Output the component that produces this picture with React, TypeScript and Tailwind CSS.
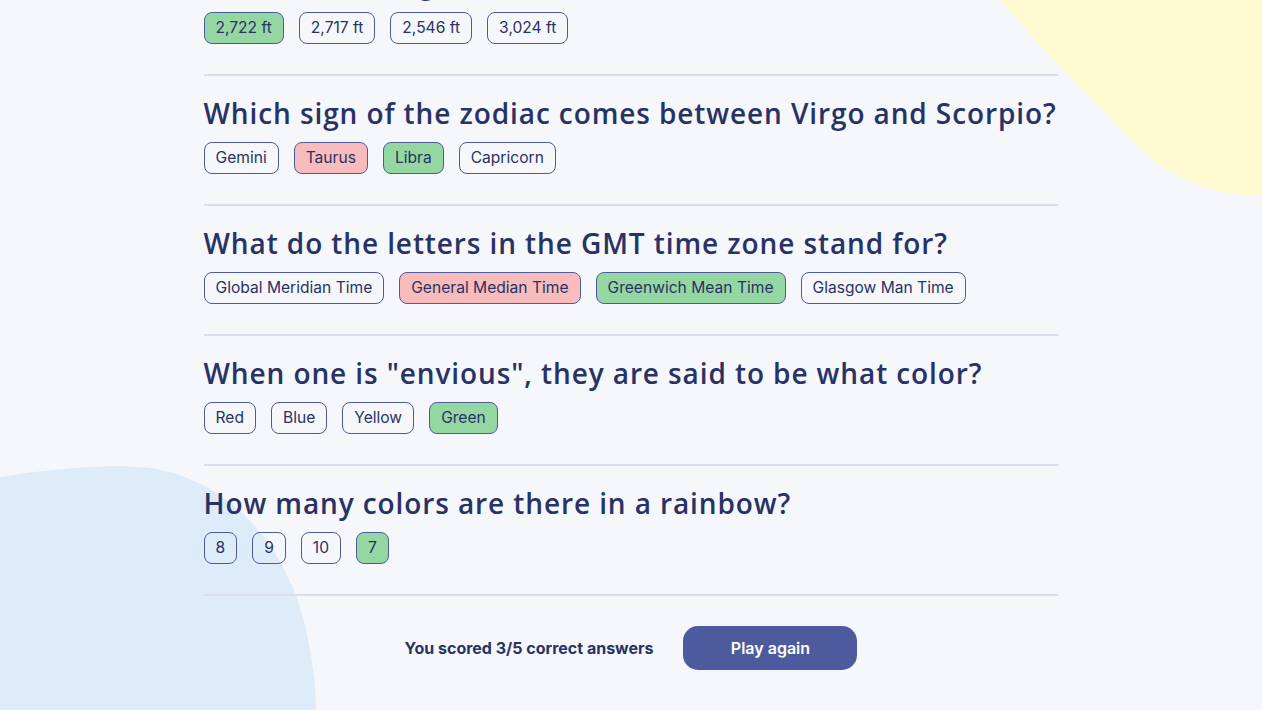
import React from 'react';

type Q = { q: string; answers: string[]; correct: string; picked: string };

const questions: Q[] = [
  { q: 'What is the height of the Hoover Dam in feet?', answers: ['2,722 ft', '2,717 ft', '2,546 ft', '3,024 ft'], correct: '2,722 ft', picked: '2,722 ft' },
  { q: 'Which sign of the zodiac comes between Virgo and Scorpio?', answers: ['Gemini', 'Taurus', 'Libra', 'Capricorn'], correct: 'Libra', picked: 'Taurus' },
  { q: 'What do the letters in the GMT time zone stand for?', answers: ['Global Meridian Time', 'General Median Time', 'Greenwich Mean Time', 'Glasgow Man Time'], correct: 'Greenwich Mean Time', picked: 'General Median Time' },
  { q: 'When one is "envious", they are said to be what color?', answers: ['Red', 'Blue', 'Yellow', 'Green'], correct: 'Green', picked: 'Green' },
  { q: 'How many colors are there in a rainbow?', answers: ['8', '9', '10', '7'], correct: '7', picked: '7' },
];

function Answer({ label, correct, picked }: { label: string; correct: string; picked: string }) {
  let tone = 'bg-transparent';
  if (label === correct) tone = 'bg-[#94D7A2]';
  else if (label === picked) tone = 'bg-[#F8BCBC]';
  return (
    <span className={`h-8 px-[11px] flex items-center rounded-[8px] border border-[#4D5B9E] text-[15.6px] font-normal text-[#293264] ${tone}`}>
      {label}
    </span>
  );
}

export default function App() {
  return (
    <div className="relative w-[1262px] h-[710px] overflow-hidden bg-[#F5F7FB] font-['Inter',sans-serif]">
      {/* blobs */}
      <svg className="absolute top-0 right-0" width="270" height="200" viewBox="0 0 270 200">
        <path d="M8 0 C60 60 110 110 150 150 C185 182 225 196 270 196 L270 0 Z" fill="#FFFAD1" />
      </svg>
      <svg className="absolute left-0 bottom-0" width="320" height="245" viewBox="0 0 320 245">
        <path d="M0 12 C50 4 110 -2 150 3 C230 15 285 80 305 160 C313 195 316 225 316 245 L0 245 Z" fill="#DEEBF8" />
      </svg>

      <div className="relative w-[855px] mx-auto -mt-[54px]">
        {questions.map((item, i) => (
          <div key={i} className="pt-5 pb-[30px] border-b-2 border-[#DBDEF0]">
            <h2 className="whitespace-nowrap text-[28px] leading-[34px] font-semibold tracking-[0.032em] text-[#293264] font-['Open_Sans',sans-serif]">
              {item.q}
            </h2>
            <div className="mt-3 flex gap-[15px]">
              {item.answers.map((a) => (
                <Answer key={a} label={a} correct={item.correct} picked={item.picked} />
              ))}
            </div>
          </div>
        ))}

        <div className="mt-[30px] flex items-center justify-center gap-[30px]">
          <span className="text-[16px] font-bold text-[#293264]">You scored 3/5 correct answers</span>
          <button className="w-[174px] h-11 rounded-[15px] bg-[#4D5B9E] text-white text-[16px] font-semibold">
            Play again
          </button>
        </div>
      </div>
    </div>
  );
}
